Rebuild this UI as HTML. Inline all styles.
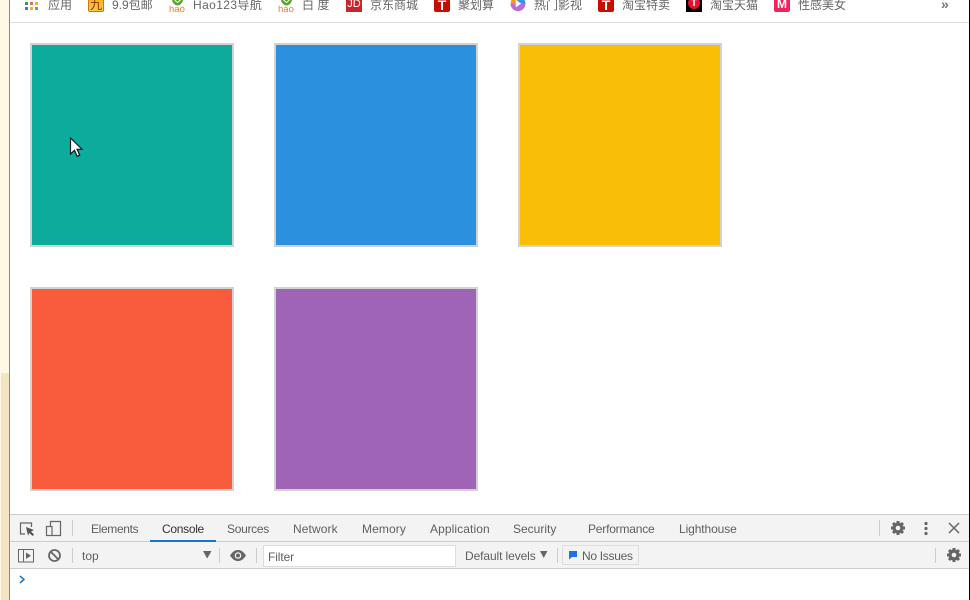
<!DOCTYPE html>
<html lang="zh"><head><meta charset="utf-8"><title>Boxes</title>
<style>
html,body{margin:0;padding:0;background:#fff}
body{width:970px;height:600px;position:relative;overflow:hidden;font-family:"Liberation Sans","Noto Sans CJK SC",sans-serif}
.a{position:absolute}
.box{position:absolute;width:200px;height:200px;border:2px solid #d2d2d2}
.bm{position:absolute;top:-3px;font-size:12px;line-height:16px;color:#666;white-space:nowrap}
.ic{position:absolute;top:-3px;width:16px;height:15px}
.tab{position:absolute;top:522px;font-size:12px;line-height:14px;color:#5f5f5f;white-space:nowrap}
.t2{position:absolute;font-size:12px;line-height:14px;color:#5f5f5f;white-space:nowrap}
.sep{position:absolute;width:1px;background:#ccc}
</style></head><body>
<div class="a" style="left:0;top:0;width:9px;height:600px;background:#fff8e6"></div>
<div class="a" style="left:1px;top:373px;width:8px;height:227px;background:#f3e5c0"></div>
<div class="a" style="left:9px;top:0;width:1px;height:600px;background:#8a8a8a"></div>
<div class="a" style="left:969px;top:0;width:1px;height:600px;background:#000"></div>

<!-- bookmark bar -->
<div class="a" style="left:10px;top:22px;width:959px;height:1px;background:#ddd"></div>
<svg class="a" style="left:25px;top:0" width="14" height="11"><g>
<rect x="0" y="2" width="3" height="3" fill="#3c9a5f"/><rect x="5" y="2" width="3" height="3" fill="#d9734f"/><rect x="10" y="2" width="3" height="3" fill="#f0b429"/>
<rect x="0" y="7" width="3" height="3" fill="#3c7fd0"/><rect x="5" y="7" width="3" height="3" fill="#f0b429"/><rect x="10" y="7" width="3" height="3" fill="#5a9ad0"/></g></svg>
<div class="bm" style="left:48px">应用</div>
<div class="ic" style="left:88px;background:linear-gradient(#f9b21c,#fbc94a);border:1px solid #c8761a;width:14px;height:13px;border-radius:2px;color:#8a3400;font-size:12px;line-height:15px;text-align:center">九</div>
<div class="bm" style="left:112px">9.9包邮</div>
<svg class="ic" style="left:169px;width:18px;height:13px;top:0" viewBox="0 0 18 13"><path d="M3 0h11c-.5 3-3 5.500-5.500 5.500S3.500 3 3 0z" fill="#5ba32b"/><path d="M5.500 0l3 2.500L11.500 0" fill="none" stroke="#fff" stroke-width="1"/><text x="0" y="12" font-size="9.500" fill="#ee7a22" font-family="Liberation Sans">hao</text></svg>
<div class="bm" style="left:193px;letter-spacing:.4px">Hao123导航</div>
<svg class="ic" style="left:278px;width:18px;height:13px;top:0" viewBox="0 0 18 13"><path d="M3 0h11c-.5 3-3 5.500-5.500 5.500S3.500 3 3 0z" fill="#5ba32b"/><path d="M5.500 0l3 2.500L11.500 0" fill="none" stroke="#fff" stroke-width="1"/><text x="0" y="12" font-size="9.500" fill="#ee7a22" font-family="Liberation Sans">hao</text></svg>
<div class="bm" style="left:302px">白 度</div>
<div class="ic" style="left:346px;background:#c9252b;color:#fff;font-size:11px;line-height:15px;text-align:center;height:15px">JD</div>
<div class="bm" style="left:370px">京东商城</div>
<div class="ic" style="left:434px;background:#c40f00;color:#fff;font-size:14px;line-height:17px;text-align:center;height:15px;border-radius:2px;font-weight:bold">T</div>
<div class="bm" style="left:458px">聚划算</div>
<svg class="ic" style="left:510px;height:13px;top:-1px" viewBox="0 0 16 14"><circle cx="8" cy="5" r="8" fill="#f29a1f"/><path d="M8-3a8 8 0 0 1 8 8L8 5z" fill="#3b8fe8"/><path d="M0 5a8 8 0 0 0 16 0L8 5z" fill="#b86ae0"/><path d="M5.500 1l6 4-6 4z" fill="#fff"/></svg>
<div class="bm" style="left:534px">热门影视</div>
<div class="ic" style="left:598px;background:#c40f00;color:#fff;font-size:14px;line-height:17px;text-align:center;height:15px;border-radius:2px;font-weight:bold">T</div>
<div class="bm" style="left:622px">淘宝特卖</div>
<div class="ic" style="left:686px;background:#000;height:15px"><div style="width:12px;height:12px;border-radius:6px;background:#e8102e;margin:0 2px;color:#fff;font-size:10px;line-height:13px;text-align:center;font-weight:bold">T</div></div>
<div class="bm" style="left:710px">淘宝天猫</div>
<div class="ic" style="left:774px;background:#f0245c;color:#fff;font-size:12px;line-height:15px;text-align:center;height:15px;border-radius:2px;font-weight:bold">M</div>
<div class="bm" style="left:798px">性感美女</div>
<div class="a" style="left:941px;top:-4px;font-size:14px;line-height:16px;color:#777;font-weight:bold">»</div>

<!-- boxes -->
<div class="box" style="left:30px;top:43px;background:#0dab9c"></div>
<div class="box" style="left:274px;top:43px;background:#2b91de"></div>
<div class="box" style="left:518px;top:43px;background:#f8be08"></div>
<div class="box" style="left:30px;top:287px;background:#f85c3c"></div>
<div class="box" style="left:274px;top:287px;background:#a064b6"></div>

<!-- cursor -->
<svg class="a" style="left:69px;top:137px" width="14" height="22" viewBox="0 0 14 22"><path d="M1.500 1v16l4-3.700 2.600 6 2.600-1.100-2.600-5.900h5z" fill="#fff" stroke="#0b1a24" stroke-width="1.200"/></svg>

<!-- devtools -->
<div class="a" style="left:10px;top:514px;width:959px;height:1px;background:#ccc"></div>
<div class="a" style="left:10px;top:515px;width:959px;height:27px;background:#f3f3f3"></div>
<div class="a" style="left:10px;top:541px;width:959px;height:1px;background:#ccc"></div>
<div class="a" style="left:10px;top:542px;width:959px;height:26px;background:#f3f3f3"></div>
<div class="a" style="left:10px;top:568px;width:959px;height:1px;background:#ccc"></div>

<svg class="a" style="left:19px;top:521px" width="17" height="16" viewBox="0 0 17 16"><path d="M6 13H1.500V2h11v4" fill="none" stroke="#666" stroke-width="1.200"/><path d="M7 6l8 3-3 1.500 3 3-1.500 1.500-3-3L9 14.500z" fill="#555"/></svg>
<svg class="a" style="left:45px;top:520px" width="17" height="17" viewBox="0 0 17 17"><path d="M5.500 6V1.500h10v14H7" fill="none" stroke="#666" stroke-width="1.200"/><rect x="1.500" y="6.500" width="5.500" height="9" fill="none" stroke="#666" stroke-width="1.200"/></svg>
<div class="sep" style="left:72px;top:520px;height:16px"></div>
<div class="tab" style="left:91px;letter-spacing:-.35px">Elements</div>
<div class="tab" style="left:162px;color:#333;letter-spacing:-.3px">Console</div>
<div class="a" style="left:150px;top:540px;width:66px;height:2px;background:#1a73c8"></div>
<div class="tab" style="left:227px;letter-spacing:-.3px">Sources</div>
<div class="tab" style="left:293px;letter-spacing:.1px">Network</div>
<div class="tab" style="left:362px;letter-spacing:.1px">Memory</div>
<div class="tab" style="left:430px;letter-spacing:.1px">Application</div>
<div class="tab" style="left:513px">Security</div>
<div class="tab" style="left:588px;letter-spacing:-.2px">Performance</div>
<div class="tab" style="left:679px;letter-spacing:-.1px">Lighthouse</div>
<div class="sep" style="left:879px;top:520px;height:16px"></div>
<svg class="a" style="left:890px;top:520px" width="16" height="16" viewBox="0 0 16 16"><circle cx="8" cy="8" r="5.500" fill="#666"/><g stroke="#666" stroke-width="3"><path d="M8 1v14M1 8h14M3 3l10 10M13 3L3 13"/></g><circle cx="8" cy="8" r="2.300" fill="#f3f3f3"/></svg>
<svg class="a" style="left:923px;top:521px" width="6" height="15"><g fill="#666"><circle cx="3" cy="2.500" r="1.600"/><circle cx="3" cy="7.500" r="1.600"/><circle cx="3" cy="12.500" r="1.600"/></g></svg>
<svg class="a" style="left:948px;top:522px" width="12" height="12"><path d="M1 1l10 10M11 1L1 11" stroke="#666" stroke-width="1.500"/></svg>

<svg class="a" style="left:18px;top:549px" width="16" height="14"><rect x=".5" y=".5" width="15" height="12.500" fill="none" stroke="#666"/><path d="M5.500 1v12" stroke="#666"/><path d="M8 3.500l5 3.200-5 3.200z" fill="#666"/></svg>
<svg class="a" style="left:47px;top:548px" width="15" height="15"><circle cx="7.500" cy="7.500" r="5.500" fill="none" stroke="#666" stroke-width="1.800"/><path d="M3.500 3.500l8 8" stroke="#666" stroke-width="1.800"/></svg>
<div class="sep" style="left:72px;top:548px;height:15px"></div>
<div class="t2" style="left:82px;top:549px">top</div>
<svg class="a" style="left:203px;top:551px" width="9" height="8"><path d="M0 0h8.500L4.200 7.500z" fill="#666"/></svg>
<div class="sep" style="left:219px;top:548px;height:15px"></div>
<svg class="a" style="left:230px;top:550px" width="16" height="11"><path d="M0 5.500C3 1 5.500 0 8 0s5 1 8 5.500C13 10 10.500 11 8 11S3 10 0 5.500z" fill="#666"/><circle cx="8" cy="5.500" r="3.300" fill="#f3f3f3"/><circle cx="8" cy="5.500" r="2" fill="#666"/></svg>
<div class="sep" style="left:256px;top:548px;height:15px"></div>
<div class="a" style="left:263px;top:545px;width:191px;height:20px;background:#fff;border:1px solid #ddd"></div>
<div class="t2" style="left:268px;top:550px;letter-spacing:-.1px">Filter</div>
<div class="t2" style="left:465px;top:549px;letter-spacing:-.1px">Default levels</div>
<svg class="a" style="left:540px;top:551px" width="8" height="8"><path d="M0 0h7.500L3.700 7z" fill="#666"/></svg>
<div class="sep" style="left:557px;top:548px;height:15px"></div>
<div class="a" style="left:562px;top:545px;width:75px;height:18px;border:1px solid #ddd;background:#f3f3f3"></div>
<svg class="a" style="left:569px;top:551px" width="10" height="10"><path d="M0 0h8v6H3L0 8.500z" fill="#1a73e8"/></svg>
<div class="t2" style="left:582px;top:549px;letter-spacing:-.3px">No Issues</div>
<div class="sep" style="left:935px;top:548px;height:15px"></div>
<svg class="a" style="left:946px;top:547px" width="16" height="16" viewBox="0 0 16 16"><circle cx="8" cy="8" r="5.500" fill="#666"/><g stroke="#666" stroke-width="3"><path d="M8 1v14M1 8h14M3 3l10 10M13 3L3 13"/></g><circle cx="8" cy="8" r="2.300" fill="#f3f3f3"/></svg>

<svg class="a" style="left:19px;top:575px" width="7" height="9"><path d="M1 1l4 3.500L1 8" fill="none" stroke="#1a73c8" stroke-width="1.500"/></svg>
</body></html>
